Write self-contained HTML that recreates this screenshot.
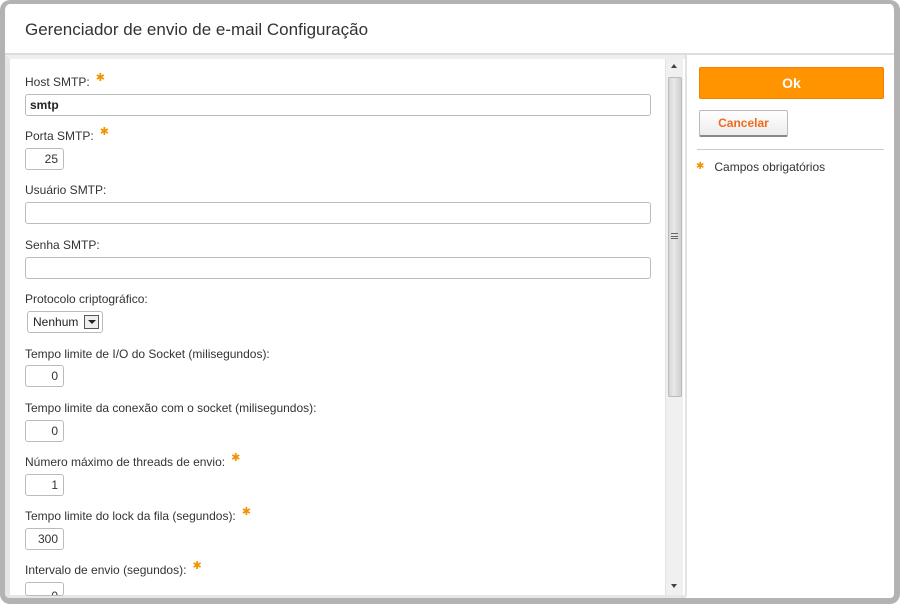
<!DOCTYPE html>
<html><head><style>
*{margin:0;padding:0;box-sizing:border-box}
body{width:900px;height:604px;background:#fff;font-family:"Liberation Sans",sans-serif;position:relative;overflow:hidden;color:#333}
.frame{position:absolute;left:0;top:0;width:900px;height:604px;border:5px solid #b3b3b3;border-radius:10px;border-top-width:4px;border-left-width:5px;border-right-width:6px;border-bottom-width:6px}
.title{position:absolute;left:25px;top:20px;font-size:17px;color:#333}
.hline{position:absolute;left:5px;top:53px;width:889px;height:2px;background:#ddd}
.lpanel{position:absolute;left:5px;top:55px;width:681px;height:543px;border-left:5px solid #e6e6e6;border-top:4px solid #eee;border-bottom:3px solid #e6e6e6}
.sb{position:absolute;left:665px;top:59px;width:18px;height:536px;background:#f0f0f0;border-left:1px solid #e4e4e4}
.thumb{position:absolute;left:668px;top:77px;width:14px;height:320px;background:linear-gradient(90deg,#d6d6d6,#e8e8e8 40%,#cfcfcf);border:1px solid #bbb;border-radius:2px}
.vdiv{position:absolute;left:685px;top:55px;width:2px;height:541px;background:#e2e2e2}
.lbl{position:absolute;left:25px;font-size:12px;color:#333}
.star{color:#f39200;font-size:11px;position:relative;top:-5px;margin-left:6px}
.in{position:absolute;left:25px;height:22px;border:1px solid #bbb;border-radius:3px;background:#fff;font-size:12px}
.wide{width:626px}
.num{width:39px;text-align:right;padding-right:5px;line-height:20px}
.ok{position:absolute;left:699px;top:67px;width:185px;height:32px;background:#ff9300;border:1px solid #f08000;border-radius:2px;color:#fff;font-weight:bold;font-size:14px;text-align:center;line-height:30px}
.cn{position:absolute;left:699px;top:110px;width:89px;height:27px;background:linear-gradient(#fff,#ececec);border:1px solid #bbb;border-bottom:2px solid #888;border-radius:2px;color:#f26a1b;font-weight:bold;font-size:12px;text-align:center;line-height:24px}
.rline{position:absolute;left:697px;top:149px;width:187px;height:1px;background:#ccc}
</style></head><body>
<div class="title">Gerenciador de envio de e-mail Configuração</div>
<div class="hline"></div>
<div class="lpanel"></div>
<div class="sb"></div>
<div style="position:absolute;left:671px;top:64px;width:0;height:0;border-left:3px solid transparent;border-right:3px solid transparent;border-bottom:4px solid #444"></div>
<div style="position:absolute;left:671px;top:584px;width:0;height:0;border-left:3px solid transparent;border-right:3px solid transparent;border-top:4px solid #444"></div>
<div class="thumb"></div>
<div style="position:absolute;left:671px;top:233px;width:7px;height:6px;border-top:1px solid #666;border-bottom:1px solid #666"><div style="margin-top:2px;height:1px;background:#666"></div></div>
<div class="vdiv"></div>

<div class="lbl" style="top:75px">Host SMTP:<span class="star">✱</span></div>
<div class="in wide" style="top:94px;font-weight:bold;padding-left:4px;line-height:20px;color:#222">smtp</div>
<div class="lbl" style="top:129px">Porta SMTP:<span class="star">✱</span></div>
<div class="in num" style="top:148px">25</div>
<div class="lbl" style="top:183px">Usuário SMTP:</div>
<div class="in wide" style="top:202px"></div>
<div class="lbl" style="top:238px">Senha SMTP:</div>
<div class="in wide" style="top:257px"></div>
<div class="lbl" style="top:292px">Protocolo criptográfico:</div>
<div class="in" style="left:27px;top:311px;width:76px;height:22px;padding-left:5px;line-height:20px;font-size:12px;color:#222">Nenhum<span style="position:absolute;right:3px;top:3px;width:15px;height:14px;border:1px solid #555;background:#eee"><span style="position:absolute;left:3px;top:4px;border-left:4px solid transparent;border-right:4px solid transparent;border-top:4px solid #222"></span></span></div>
<div class="lbl" style="top:347px">Tempo limite de I/O do Socket (milisegundos):</div>
<div class="in num" style="top:365px">0</div>
<div class="lbl" style="top:401px">Tempo limite da conexão com o socket (milisegundos):</div>
<div class="in num" style="top:420px">0</div>
<div class="lbl" style="top:455px">Número máximo de threads de envio:<span class="star">✱</span></div>
<div class="in num" style="top:474px">1</div>
<div class="lbl" style="top:509px">Tempo limite do lock da fila (segundos):<span class="star">✱</span></div>
<div class="in num" style="top:528px">300</div>
<div class="lbl" style="top:563px">Intervalo de envio (segundos):<span class="star">✱</span></div>
<div class="in num" style="top:582px;height:14px;overflow:hidden;line-height:26px">0</div>

<div class="ok">Ok</div>
<div class="cn">Cancelar</div>
<div class="rline"></div>
<div style="position:absolute;left:696px;top:160px;font-size:12px;color:#333"><span style="color:#f39200;font-size:10px;position:relative;top:-2px">✱</span>&nbsp;&nbsp;&nbsp;Campos obrigatórios</div>
<div class="frame"></div>
</body></html>
